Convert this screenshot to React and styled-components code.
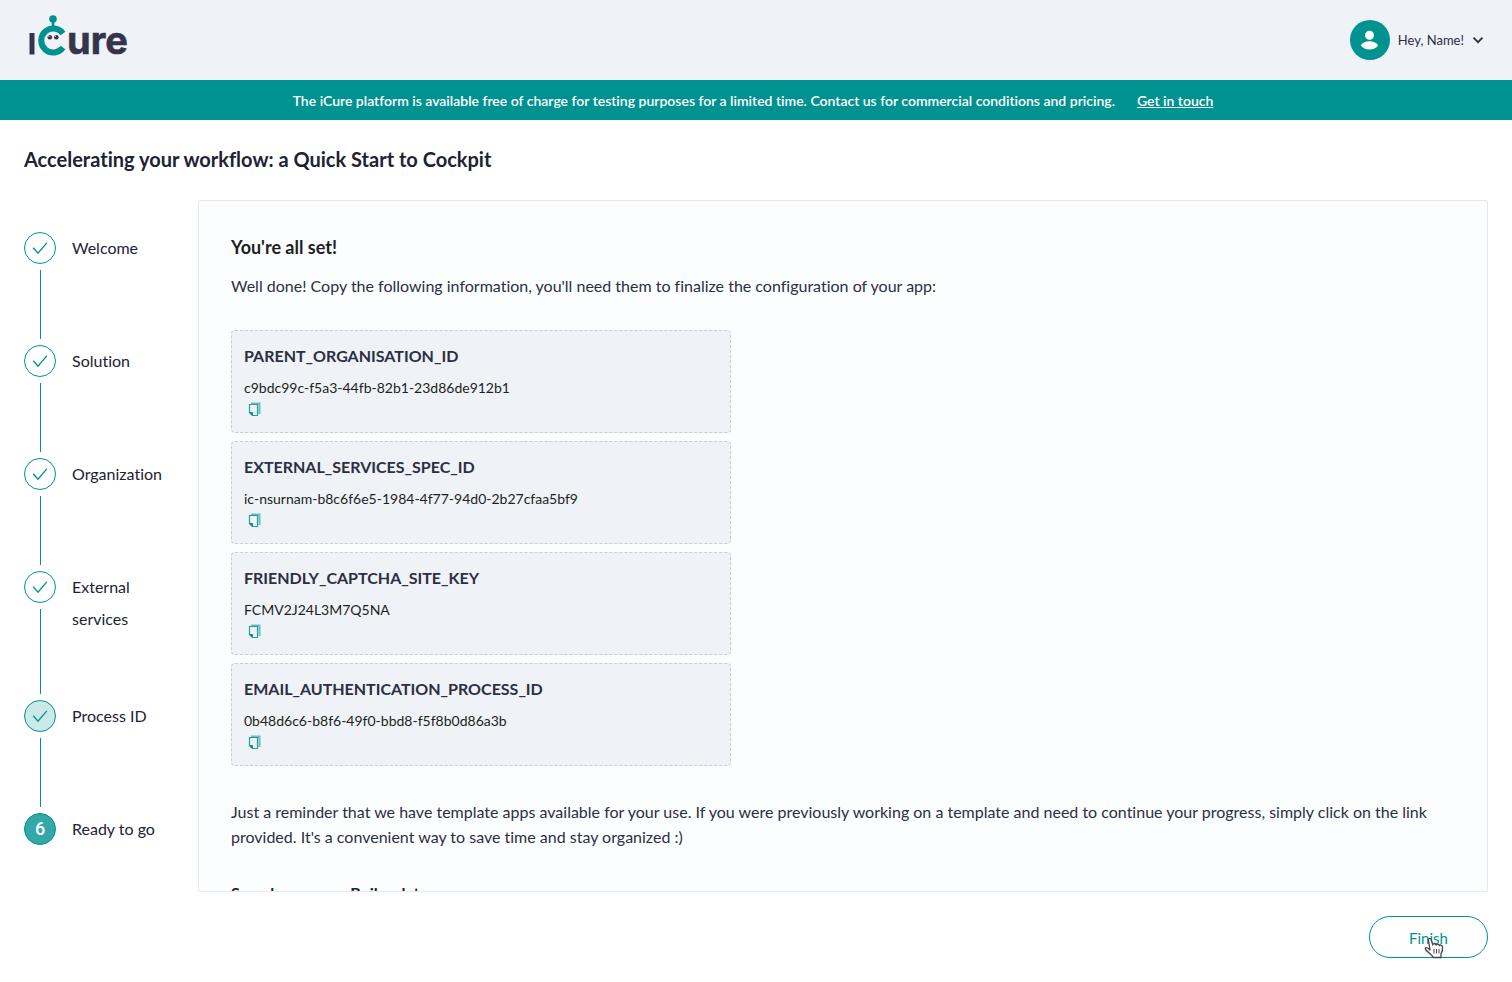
import React from 'react';
import styled, { createGlobalStyle } from 'styled-components';

const GlobalStyle = createGlobalStyle`
  *, *::before, *::after { box-sizing: border-box; }
  body {
    margin: 0;
    background: #fff;
    color: #1d2235;
    font-family: Lato, "Liberation Sans", sans-serif;
    font-variant-ligatures: none;
  }
`;

const Page = styled.div`
  display: flex;
  flex-direction: column;
  height: 100vh;
`;

const Header = styled.header`
  display: flex;
  align-items: center;
  justify-content: space-between;
  flex: none;
  height: 80px;
  padding: 0 28px;
  background: #eff2f7;
`;

const HomeLink = styled.a`
  display: block;
  svg { display: block; }
`;

const UserMenu = styled.button`
  display: flex;
  align-items: center;
  gap: 8px;
  padding: 0;
  border: 0;
  background: none;
  color: #2c2f42;
  font: 400 13px/20px Lato, sans-serif;
  cursor: pointer;
`;

const Banner = styled.div`
  display: flex;
  align-items: center;
  justify-content: center;
  gap: 22px;
  flex: none;
  height: 40px;
  padding: 2px 24px 0 18px;
  background: #009290;
  color: #fff;
  font-size: 14px;
  font-weight: 600;
  line-height: 20px;
`;

const BannerLink = styled.a`
  color: inherit;
`;

const Main = styled.main`
  display: flex;
  flex-direction: column;
  flex: 1;
  min-height: 0;
  padding: 24px;
`;

const Title = styled.h1`
  margin: 0 0 26px;
  font-size: 20px;
  font-weight: 700;
  line-height: 30px;
`;

const Columns = styled.div`
  display: flex;
  flex: 1;
  gap: 24px;
  min-height: 0;
`;

const Steps = styled.ol`
  display: flex;
  flex-direction: column;
  flex: none;
  width: 150px;
  margin: 0;
  padding: 32px 0 0;
  list-style: none;
`;

const Step = styled.li`
  display: flex;
  gap: 16px;
`;

const Rail = styled.div`
  display: flex;
  flex-direction: column;
  align-items: center;
  flex: none;
  width: 32px;
`;

const Marker = styled.span`
  display: flex;
  align-items: center;
  justify-content: center;
  flex: none;
  width: 32px;
  height: 32px;
  border: 1px solid #009290;
  border-radius: 50%;
  background: ${({ $state }) => ({ done: '#fff', visited: '#cce9e9', current: '#33a8a6' })[$state]};
  color: ${({ $state }) => ($state === 'current' ? '#fff' : '#009290')};
  font-family: Roboto, sans-serif;
  font-size: 18px;
  font-weight: 500;
  line-height: 32px;
`;

const Connector = styled.span`
  flex: 1;
  width: 1px;
  margin: 6px 0;
  background: #009290;
`;

const StepLabel = styled.span`
  min-height: 48px;
  margin-bottom: 65px;
  font-size: 16px;
  line-height: 32px;
`;

const Panel = styled.section`
  flex: 1;
  min-width: 0;
  padding: 32px;
  overflow: auto;
  scrollbar-width: none;
  border: 1px solid #e6e8eb;
  border-radius: 2px;
  background: #fcfdff;
`;

const PanelTitle = styled.h2`
  margin: 0 0 12px;
  color: #1d1f24;
  font-size: 18px;
  font-weight: 700;
  line-height: 28px;
`;

const Text = styled.p`
  margin: 0 0 32px;
  color: #2c2f42;
  font-size: 16px;
  line-height: 25px;
`;

const Keys = styled.div`
  display: flex;
  flex-direction: column;
  gap: 8px;
  max-width: 500px;
  margin-bottom: 33px;
`;

const KeyCard = styled.div`
  padding: 12px;
  border: 1px dashed #c9ced6;
  border-radius: 4px;
  background: #eff2f7;
`;

const KeyName = styled.h3`
  margin: 0 0 8px;
  color: #2c2f42;
  font-size: 16px;
  font-weight: 700;
  line-height: 25px;
`;

const KeyValue = styled.div`
  color: #1d1f24;
  font-size: 14px;
  line-height: 24px;
`;

const CopyButton = styled.button`
  display: block;
  height: 20px;
  padding: 0 4px;
  border: 0;
  background: none;
  color: #009290;
  cursor: pointer;
  svg { display: block; }
`;

const Subheading = styled.h3`
  margin: 0 0 16px;
  font-size: 16px;
  font-weight: 700;
  line-height: 24px;
`;

const Actions = styled.div`
  display: flex;
  justify-content: flex-end;
  flex: none;
  padding-top: 24px;
`;

const FinishButton = styled.button`
  position: relative;
  width: 119px;
  height: 42px;
  padding: 2px 0 0;
  border: 1px solid #009290;
  border-radius: 21px;
  background: #fff;
  color: #009290;
  font: 400 15px/24px Lato, sans-serif;
  cursor: pointer;
`;

const Pointer = styled.svg`
  position: absolute;
  top: 20px;
  left: 54px;
`;

const Logo = () => (
  <svg width="104" height="72" viewBox="28 4 104 72" role="img" aria-label="iCure">
    <path d="M29.500 33H34.500V54.500H29.500z" fill="#34344a" />
    <path d="M53 19v8" stroke="#009290" strokeWidth="2.600" />
    <circle cx="53" cy="19" r="3.800" fill="#009290" />
    <path d="M63 33.500A12 12 0 1 0 63 47.500" fill="none" stroke="#009290" strokeWidth="6" />
    <circle cx="49.800" cy="37.300" r="2.300" fill="#34344a" />
    <circle cx="56.300" cy="37.300" r="2.300" fill="#34344a" />
    <path d="M47.500 35.600l2 .8M54.300 35.600l1.700.8" stroke="#eff2f7" strokeWidth="1" />
    <text x="67" y="54" fill="#34344a" stroke="#34344a" strokeWidth=".6" fontFamily="Inter, sans-serif" fontSize="38" fontWeight="700">ure</text>
  </svg>
);

const Avatar = () => (
  <svg width="40" height="40" viewBox="0 0 40 40" aria-hidden="true">
    <circle cx="20" cy="20" r="20" fill="#009290" />
    <circle cx="19.500" cy="15.200" r="4.500" fill="#fff" />
    <path d="M10.800 25.200c2-2.900 5-4 8.700-4s6.700 1.100 8.700 4c-2 2.900-5 4.200-8.700 4.200s-6.700-1.300-8.700-4.200z" fill="#fff" />
  </svg>
);

const Chevron = () => (
  <svg width="12" height="12" viewBox="0 0 12 12" fill="none" stroke="#2c2f42" strokeWidth="1.800" aria-hidden="true">
    <path d="M1.500 3.700 6 8.200l4.500-4.500" />
  </svg>
);

const Check = () => (
  <svg width="16" height="16" viewBox="0 0 16 16" fill="none" stroke="currentColor" strokeWidth="1.300" aria-hidden="true">
    <path d="M1.200 7.800 6 13.200 14.800 2.800" />
  </svg>
);

const CopyIcon = () => (
  <svg width="14" height="16" viewBox="0 1 14 16" fill="none" stroke="currentColor" aria-hidden="true">
    <path d="M3 2.500H11.500V13" strokeWidth="2" opacity=".55" />
    <path d="M1.500 3.500h8v11H4.500l-3-3z" strokeWidth="1.200" opacity=".85" />
    <path d="M1.500 11.500h3v3z" fill="currentColor" />
  </svg>
);

const steps = [
  { label: 'Welcome', state: 'done' },
  { label: 'Solution', state: 'done' },
  { label: 'Organization', state: 'done' },
  { label: 'External services', state: 'done' },
  { label: 'Process ID', state: 'visited' },
  { label: 'Ready to go', state: 'current' },
];

const keys = [
  ['PARENT_ORGANISATION_ID', 'c9bdc99c-f5a3-44fb-82b1-23d86de912b1'],
  ['EXTERNAL_SERVICES_SPEC_ID', 'ic-nsurnam-b8c6f6e5-1984-4f77-94d0-2b27cfaa5bf9'],
  ['FRIENDLY_CAPTCHA_SITE_KEY', 'FCMV2J24L3M7Q5NA'],
  ['EMAIL_AUTHENTICATION_PROCESS_ID', '0b48d6c6-b8f6-49f0-bbd8-f5f8b0d86a3b'],
];

export default function App() {
  return (
    <Page>
      <GlobalStyle />
      <Header>
        <HomeLink href="#"><Logo /></HomeLink>
        <UserMenu type="button">
          <Avatar />
          <span>Hey, Name!</span>
          <Chevron />
        </UserMenu>
      </Header>
      <Banner>
        <span>The iCure platform is available free of charge for testing purposes for a limited time. Contact us for commercial conditions and pricing.</span>
        <BannerLink href="#contact">Get in touch</BannerLink>
      </Banner>
      <Main>
        <Title>Accelerating your workflow: a Quick Start to Cockpit</Title>
        <Columns>
          <Steps>
            {steps.map(({ label, state }, i) => (
              <Step key={label}>
                <Rail>
                  <Marker $state={state}>{state === 'current' ? i + 1 : <Check />}</Marker>
                  {i < steps.length - 1 && <Connector />}
                </Rail>
                <StepLabel>{label}</StepLabel>
              </Step>
            ))}
          </Steps>
          <Panel>
            <PanelTitle>You're all set!</PanelTitle>
            <Text>Well done! Copy the following information, you'll need them to finalize the configuration of your app:</Text>
            <Keys>
              {keys.map(([name, value]) => (
                <KeyCard key={name}>
                  <KeyName>{name}</KeyName>
                  <KeyValue>{value}</KeyValue>
                  <CopyButton type="button" aria-label={`Copy ${name}`}><CopyIcon /></CopyButton>
                </KeyCard>
              ))}
            </Keys>
            <Text>Just a reminder that we have template apps available for your use. If you were previously working on a template and need to continue your progress, simply click on the link provided. It's a convenient way to save time and stay organized :)</Text>
            <Subheading>Sample apps are Boilerplate</Subheading>
          </Panel>
        </Columns>
        <Actions>
          <FinishButton type="button">
            Finish
            <Pointer width="20" height="22" viewBox="0 0 20 22" fill="#fff" stroke="#444" strokeWidth="1.300" strokeLinejoin="round" aria-hidden="true">
              <path d="M6 13 4.500 3.500C4 1 6.500.500 7.200 2.800L8.800 8c0-1.800 2.700-1.800 3.200.200.300-1.500 2.800-1.500 3.200.500.500-1.200 3-.900 3.300 1.200.300 2.500 0 4.500-1.500 7v3.600H9.500C8 18 4 15.500 1.500 12.500c-1-2 1.500-3 4.500.500z" />
              <path d="M10 12v4.500M12.500 12v4.500M15 12v4.500" strokeWidth="1" />
            </Pointer>
          </FinishButton>
        </Actions>
      </Main>
    </Page>
  );
}
